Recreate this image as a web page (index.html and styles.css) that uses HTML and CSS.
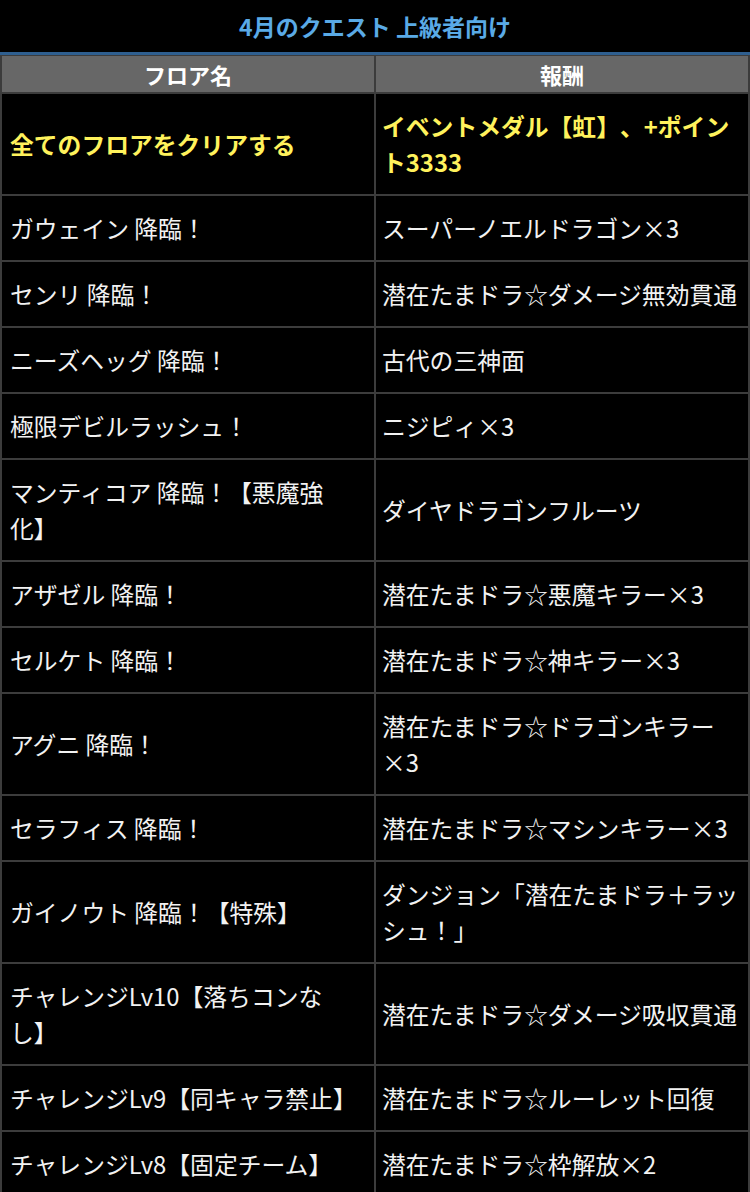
FILE: index.html
```html
<!DOCTYPE html>
<html lang="ja">
<head>
<meta charset="utf-8">
<link rel="stylesheet" href="styles.css">
</head>
<body>
<div class="title">4月のクエスト 上級者向け</div>
<div class="grid">
  <div class="head">フロア名</div>
  <div class="head">報酬</div>

  <div class="cell strong">全てのフロアをクリアする</div>
  <div class="cell strong">イベントメダル【虹】、+ポイン<br>ト3333</div>

  <div class="cell">ガウェイン 降臨！</div>
  <div class="cell">スーパーノエルドラゴン×3</div>

  <div class="cell">センリ 降臨！</div>
  <div class="cell">潜在たまドラ☆ダメージ無効貫通</div>

  <div class="cell">ニーズヘッグ 降臨！</div>
  <div class="cell">古代の三神面</div>

  <div class="cell">極限デビルラッシュ！</div>
  <div class="cell">ニジピィ×3</div>

  <div class="cell">マンティコア 降臨！【悪魔強<br>化】</div>
  <div class="cell">ダイヤドラゴンフルーツ</div>

  <div class="cell">アザゼル 降臨！</div>
  <div class="cell">潜在たまドラ☆悪魔キラー×3</div>

  <div class="cell">セルケト 降臨！</div>
  <div class="cell">潜在たまドラ☆神キラー×3</div>

  <div class="cell">アグニ 降臨！</div>
  <div class="cell">潜在たまドラ☆ドラゴンキラー<br>×3</div>

  <div class="cell">セラフィス 降臨！</div>
  <div class="cell">潜在たまドラ☆マシンキラー×3</div>

  <div class="cell">ガイノウト 降臨！【特殊】</div>
  <div class="cell">ダンジョン「潜在たまドラ＋ラッ<br>シュ！」</div>

  <div class="cell">チャレンジLv10【落ちコンな<br>し】</div>
  <div class="cell">潜在たまドラ☆ダメージ吸収貫通</div>

  <div class="cell">チャレンジLv9【同キャラ禁止】</div>
  <div class="cell">潜在たまドラ☆ルーレット回復</div>

  <div class="cell">チャレンジLv8【固定チーム】</div>
  <div class="cell">潜在たまドラ☆枠解放×2</div>
</div>
</body>
</html>
```

FILE: styles.css
```css
html, body {
  margin: 0;
  padding: 0;
  background: #000;
}
body {
  font-family: "Noto Sans CJK JP", "Noto Sans", sans-serif;
  color: #f2f2f2;
  width: 750px;
  text-spacing-trim: space-all;
}
.title {
  line-height: 52px;
  text-align: center;
  color: #5aaae6;
  font-weight: bold;
  font-size: 23px;
  border-bottom: 3px solid #2f5f8f;
  box-sizing: border-box;
  height: 55px;
}
.grid {
  display: grid;
  grid-template-columns: 372px 1fr;
  gap: 2px;
  padding: 1px 2px 2px 2px;
  background: #3c3c3c;
}
.head {
  background: #676767;
  color: #fff;
  font-weight: bold;
  font-size: 22px;
  line-height: 36px;
  height: 36px;
  text-align: center;
}
.cell {
  background: #000;
  font-size: 23.8px;
  line-height: 36px;
  padding: 14px 4px 14px 8px;
  display: flex;
  align-items: center;
  white-space: nowrap;
}
.grid .cell:nth-child(even) {
  padding-left: 6px;
}
.strong {
  color: #fff25c;
  font-weight: bold;
}
```
